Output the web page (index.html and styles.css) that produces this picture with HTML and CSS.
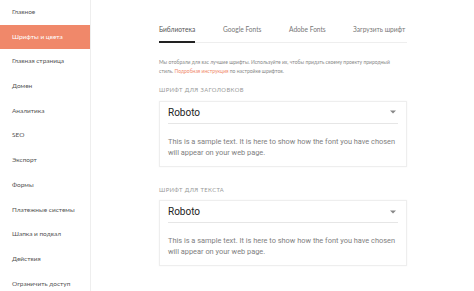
FILE: index.html
```html
<!DOCTYPE html>
<html lang="ru">
<head>
    <meta charset="UTF-8">
    <meta name="viewport" content="width=device-width, initial-scale=1.0">
    <title>Шрифты и цвета</title>
    <link rel="stylesheet" href="styles.css">
</head>
<body>
    <aside class="sidebar">
        <a class="nav-item">Главное</a>
        <a class="nav-item active">Шрифты и цвета</a>
        <a class="nav-item">Главная страница</a>
        <a class="nav-item">Домен</a>
        <a class="nav-item">Аналитика</a>
        <a class="nav-item">SEO</a>
        <a class="nav-item">Экспорт</a>
        <a class="nav-item">Формы</a>
        <a class="nav-item">Платежные системы</a>
        <a class="nav-item">Шапка и подвал</a>
        <a class="nav-item">Действия</a>
        <a class="nav-item">Ограничить доступ</a>
    </aside>
    <main class="content">
        <nav class="tabs">
            <div class="tab active"><span>Библиотека</span></div>
            <div class="tab"><span>Google Fonts</span></div>
            <div class="tab"><span>Adobe Fonts</span></div>
            <div class="tab"><span>Загрузить шрифт</span></div>
        </nav>
        <p class="intro">
            Мы отобрали для вас лучшие шрифты. Используйте их, чтобы придать своему проекту природный<br>
            стиль. <a class="link">Подробная инструкция</a> по настройке шрифтов.
        </p>

        <div class="label">Шрифт для заголовков</div>
        <div class="font-card">
            <div class="select">
                <span>Roboto</span>
                <svg width="6" height="4" viewBox="0 0 6 4"><path d="M0 0.5 L3 3.5 L6 0.5 Z" fill="#888"/></svg>
            </div>
            <p class="sample">This is a sample text. It is here to show how the font you have chosen will appear on your web page.</p>
        </div>

        <div class="label second">Шрифт для текста</div>
        <div class="font-card">
            <div class="select">
                <span>Roboto</span>
                <svg width="6" height="4" viewBox="0 0 6 4"><path d="M0 0.5 L3 3.5 L6 0.5 Z" fill="#888"/></svg>
            </div>
            <p class="sample">This is a sample text. It is here to show how the font you have chosen will appear on your web page.</p>
        </div>
    </main>
</body>
</html>
```

FILE: styles.css
```css
body {
    margin: 0;
    display: flex;
    min-height: 100vh;
    background-color: #fff;
    font-family: Lato, "Open Sans", sans-serif;
    color: #555;
    overflow: hidden;
}
.sidebar {
    width: 90px;
    flex-shrink: 0;
    border-right: 1px solid #eee;
    display: flex;
    flex-direction: column;
}
.nav-item {
    height: 24.7px;
    line-height: 24.7px;
    padding-left: 12px;
    font-size: 6.5px;
    color: #555;
    white-space: nowrap;
}
.nav-item.active {
    background-color: #f0886a;
    color: #fff;
}
.content {
    padding-left: 68px;
    width: 248px;
}
.tabs {
    display: grid;
    grid-template-columns: 64px 66px 64px auto;
    margin-top: 25px;
    border-bottom: 1px solid #eee;
}
.tab {
    display: flex;
}
.tab span {
    font-size: 6.6px;
    line-height: 8px;
    color: #777;
    white-space: nowrap;
    padding-bottom: 8px;
    border-bottom: 2px solid transparent;
    margin-bottom: -1px;
}
.tab.active span {
    border-bottom-color: #222;
    color: #555;
}
.intro {
    margin: 15px 0 0;
    font-size: 5px;
    line-height: 9px;
    color: #888;
    white-space: nowrap;
}
.link {
    color: #f0886a;
}
.label {
    margin-top: 10px;
    font-size: 5.8px;
    line-height: 7px;
    letter-spacing: 0.4px;
    text-transform: uppercase;
    color: #999;
}
.label.second {
    margin-top: 19px;
}
.font-card {
    margin-top: 7.5px;
    height: 66px;
    box-sizing: border-box;
    border: 1px solid #eee;
    box-shadow: 0 0 2px rgba(0, 0, 0, 0.04);
    padding: 0 8px;
    font-family: Roboto, sans-serif;
}
.select {
    display: flex;
    align-items: center;
    justify-content: space-between;
    height: 21px;
    border-bottom: 1px solid #e6e6e6;
    font-size: 10px;
    color: #222;
    padding-right: 2px;
}
.sample {
    margin: 12px 0 0;
    font-size: 7.4px;
    line-height: 11px;
    color: #808080;
}
```
